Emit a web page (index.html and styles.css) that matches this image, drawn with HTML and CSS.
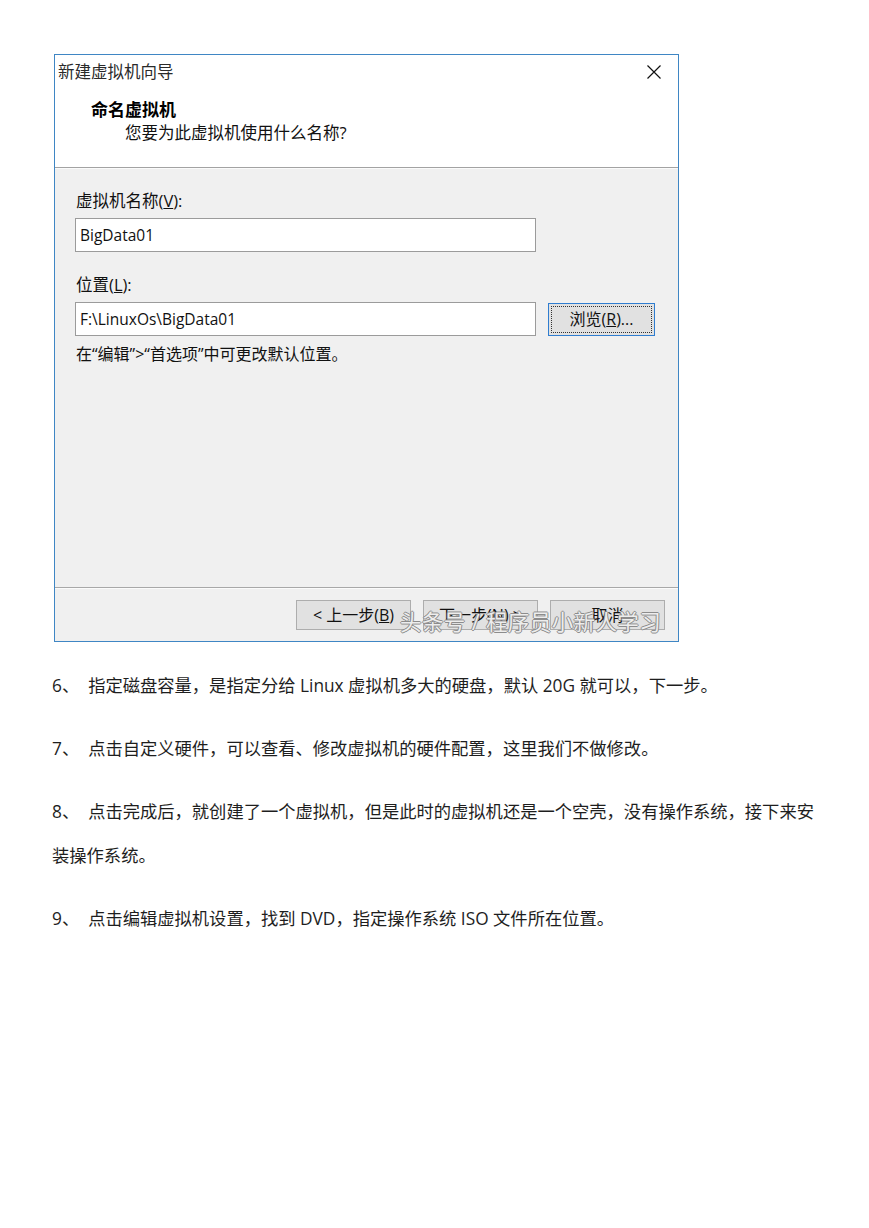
FILE: index.html
```html
<!DOCTYPE html>
<html lang="zh-CN">
<head>
<meta charset="utf-8">
<title>新建虚拟机向导</title>
<link rel="stylesheet" href="styles.css">
</head>
<body>
<div class="page">
  <div class="dlg">
    <div class="head">
      <div class="titlebar">
        <span class="title">新建虚拟机向导</span>
        <svg class="close" width="16" height="16" viewBox="0 0 16 16"><path d="M1.5 1.5 L14.5 14.5 M14.5 1.5 L1.5 14.5" stroke="#111" stroke-width="1.2" fill="none"/></svg>
      </div>
      <div class="intro">
        <div class="h1">命名虚拟机</div>
        <div class="h2">您要为此虚拟机使用什么名称?</div>
      </div>
    </div>
    <div class="body">
      <div class="label">虚拟机名称(<u>V</u>):</div>
      <div class="input wide">BigData01</div>
      <div class="label second">位置(<u>L</u>):</div>
      <div class="row">
        <div class="input wide">F:\LinuxOs\BigData01</div>
        <div class="btn browse">浏览(<u>R</u>)...</div>
      </div>
      <div class="note">在“编辑”&gt;“首选项”中可更改默认位置。</div>
    </div>
    <div class="foot">
      <div class="btn">&lt; 上一步(<u>B</u>)</div>
      <div class="btn">下一步(<u>N</u>) &gt;</div>
      <div class="btn">取消</div>
      <div class="watermark">头条号 / 程序员小新人学习</div>
    </div>
  </div>

  <div class="article">
    <p>6、&nbsp; 指定磁盘容量，是指定分给 Linux 虚拟机多大的硬盘，默认 20G 就可以，下一步。</p>
    <p>7、&nbsp; 点击自定义硬件，可以查看、修改虚拟机的硬件配置，这里我们不做修改。</p>
    <p>8、&nbsp; 点击完成后，就创建了一个虚拟机，但是此时的虚拟机还是一个空壳，没有操作系统，接下来安装操作系统。</p>
    <p>9、&nbsp; 点击编辑虚拟机设置，找到 DVD，指定操作系统 ISO 文件所在位置。</p>
  </div>
</div>
</body>
</html>
```
FILE: styles.css
```css
* { box-sizing: border-box; }
html, body { margin: 0; padding: 0; background: #fff; }
body {
  font-family: "Open Sans", "Noto Sans CJK SC", sans-serif;
  color: #111;
}
.page {
  padding: 54px 0 0 52px;
}
.dlg {
  margin-left: 2px;
  width: 625px;
  height: 588px;
  border: 1px solid #3f86c4;
  display: flex;
  flex-direction: column;
  background: #f0f0f0;
}
.head {
  height: 113px;
  background: #fff;
  border-bottom: 1px solid #a3a3a3;
  flex: none;
}
.titlebar {
  height: 34px;
  display: flex;
  align-items: center;
  justify-content: space-between;
  padding: 0 16px 0 3px;
}
.title {
  font-size: 16.5px;
  line-height: 34px;
  color: #2a2a2a;
}
.close { display: block; }
.intro {
  padding: 9px 0 0 36px;
}
.h1 {
  font-size: 17px;
  font-weight: bold;
  line-height: 23px;
  color: #000;
}
.h2 {
  font-size: 16.5px;
  line-height: 23px;
  padding-left: 34px;
  color: #111;
}
.body {
  flex: 1;
  border-top: 1px solid #fbfbfb;
  padding: 21px 0 0 20px;
}
.label {
  font-size: 16.5px;
  line-height: 22px;
  padding-left: 1px;
}
.label.second { margin-top: 22px; }
.input {
  margin-top: 6px;
  height: 34px;
  background: #fff;
  border: 1px solid #9b9b9b;
  font-size: 15.5px;
  line-height: 32px;
  padding-left: 4px;
  color: #111;
}
.input.wide { width: 461px; }
.row {
  display: flex;
  align-items: center;
  gap: 12px;
  margin-top: 6px;
}
.row .input { margin-top: 0; }
.btn {
  height: 30px;
  width: 115px;
  background: #e1e1e1;
  border: 1px solid #adadad;
  font-size: 16px;
  line-height: 28px;
  text-align: center;
  color: #111;
  flex: none;
}
.btn.browse {
  width: 107px;
  height: 33px;
  line-height: 31px;
  border-color: #2f7dd0;
  outline: 1px dotted #333;
  outline-offset: -4px;
}
.note {
  margin-top: 7px;
  font-size: 16px;
  line-height: 22px;
  padding-left: 1px;
}
.foot {
  position: relative;
  height: 54px;
  flex: none;
  border-top: 1px solid #a8a8a8;
  box-shadow: inset 0 1px 0 #fbfbfb;
  display: flex;
  justify-content: flex-end;
  gap: 12px;
  padding: 12px 13px 0 0;
}
.watermark {
  position: absolute;
  left: 345px;
  top: 21px;
  font-size: 21.5px;
  line-height: 26px;
  letter-spacing: 0.4px;
  color: rgba(255, 255, 255, 0.85);
  text-shadow: 1px 0 0 #8c8c8c, -1px 0 0 #8c8c8c, 0 1px 0 #8c8c8c, 0 -1px 0 #8c8c8c;
  white-space: nowrap;
}
.article {
  width: 775px;
  margin-top: 22px;
}
.article p {
  margin: 0 0 19px;
  font-size: 17.3px;
  line-height: 44px;
  color: #1e1e1e;
}
```
